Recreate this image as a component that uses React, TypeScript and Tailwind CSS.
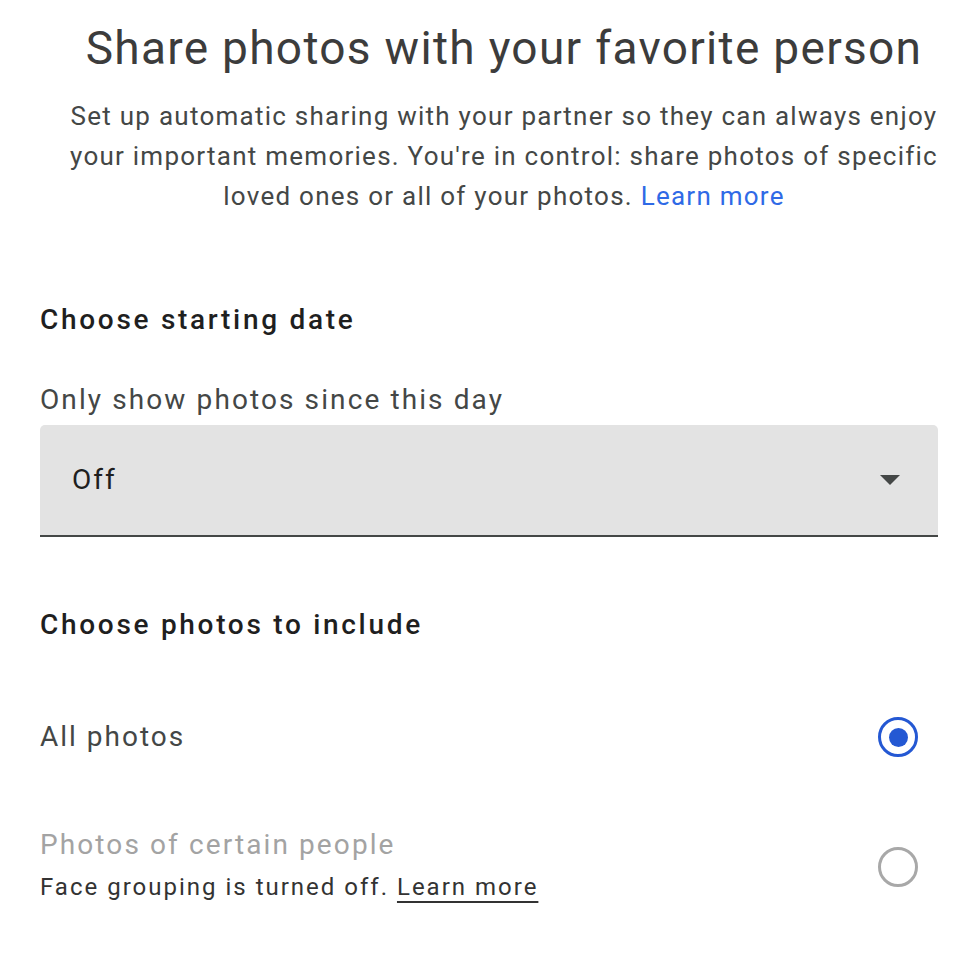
import React from 'react';

const Radio = ({ checked }: { checked: boolean }) =>
  checked ? (
    <div className="w-10 h-10 rounded-full border-[3px] border-[#2458d3] flex items-center justify-center">
      <div className="w-[19px] h-[19px] rounded-full bg-[#2458d3]" />
    </div>
  ) : (
    <div className="w-10 h-10 rounded-full border-[3px] border-[#a8a8a8]" />
  );

const App = () => {
  return (
    <div className="w-[978px] h-[962px] bg-white text-[#1f1f1f]" style={{ fontFamily: 'Roboto, "Noto Sans", sans-serif' }}>
      <div className="pl-10 pr-[10px]">
        {/* Header */}
        <div className="text-center pt-[20px]">
          <h1 className="text-[46px] leading-[56px] text-[#3c3c3c] font-normal tracking-[1.3px]">
            Share photos with your favorite person
          </h1>
          <p className="mt-[20px] text-[26px] leading-[40px] text-[#444746] tracking-[1.25px]">
            Set up automatic sharing with your partner so they can always enjoy
            <br />
            your important memories. You're in control: share photos of specific
            <br />
            loved ones or all of your photos. <span className="text-[#2f6ae6]">Learn more</span>
          </p>
        </div>
      </div>

      <div className="pl-10 pr-10">
        {/* Starting date */}
        <h2 className="mt-[84px] text-[28px] leading-[40px] font-medium text-[#1f1f1f] tracking-[2.7px]">
          Choose starting date
        </h2>
        <div className="mt-[40px] text-[28px] leading-[40px] text-[#444746] tracking-[2.1px]">
          Only show photos since this day
        </div>
        <div className="mt-[5px] h-[112px] bg-[#e3e3e3] rounded-t-[5px] border-b-2 border-[#444746] flex items-center justify-between pl-8 pr-[38px]">
          <span className="text-[28px] text-[#1f1f1f] tracking-[2px]">Off</span>
          <svg width="20" height="10" viewBox="0 0 20 10">
            <path d="M0 0 L20 0 L10 10 Z" fill="#444746" />
          </svg>
        </div>

        {/* Photos to include */}
        <h2 className="mt-[68px] text-[28px] leading-[40px] font-medium text-[#1f1f1f] tracking-[2.7px]">
          Choose photos to include
        </h2>
        <div className="mt-[72px] flex items-center justify-between pr-[20px]">
          <span className="text-[28px] leading-[40px] text-[#444746] tracking-[2px]">All photos</span>
          <Radio checked />
        </div>
        <div className="mt-[68px] flex items-center justify-between pr-[20px]">
          <div>
            <div className="text-[28px] leading-[40px] text-[#a3a3a3] tracking-[2.1px]">Photos of certain people</div>
            <div className="text-[24px] leading-[44px] text-[#333333] tracking-[2px]">
              Face grouping is turned off. <span className="underline underline-offset-[6px]">Learn more</span>
            </div>
          </div>
          <Radio checked={false} />
        </div>
      </div>
    </div>
  );
};

export default App;
